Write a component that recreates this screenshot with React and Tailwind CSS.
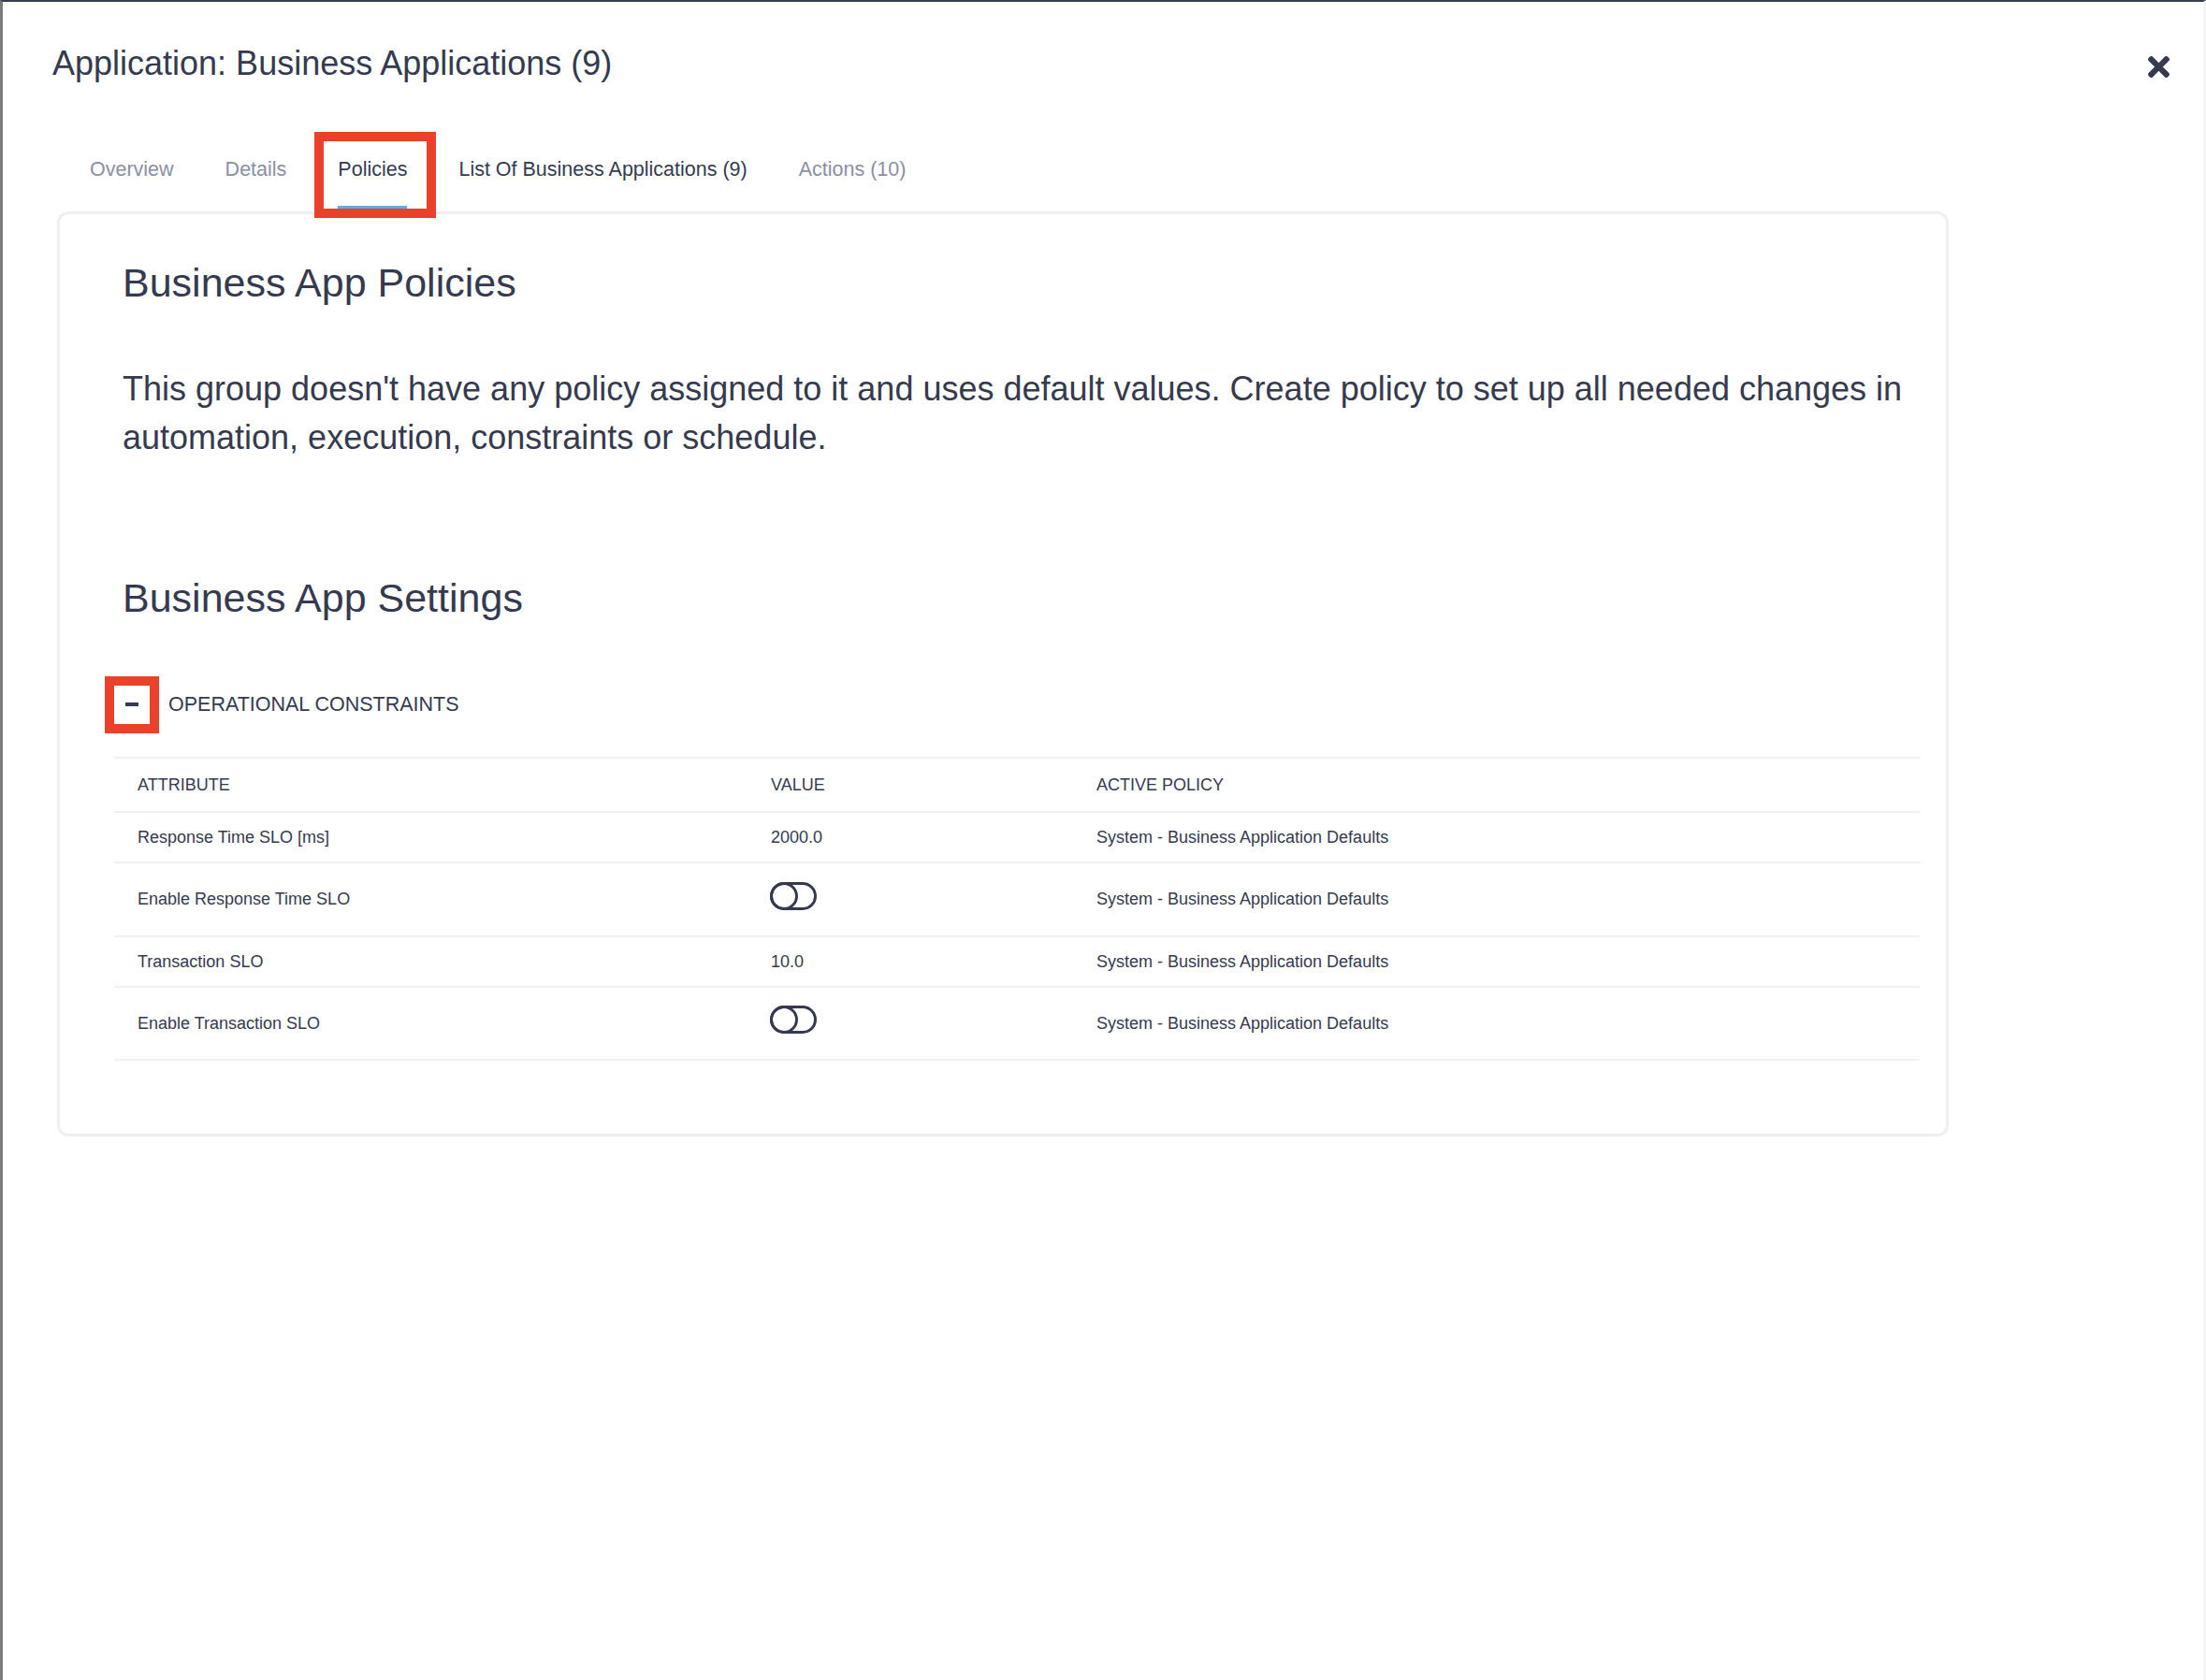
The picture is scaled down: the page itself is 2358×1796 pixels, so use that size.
import React from 'react';

const tabs = [
  { label: 'Overview', active: false, dark: false },
  { label: 'Details', active: false, dark: false },
  { label: 'Policies', active: true, dark: true },
  { label: 'List Of Business Applications (9)', active: false, dark: true },
  { label: 'Actions (10)', active: false, dark: false }
];

const rows = [
  { attr: 'Response Time SLO [ms]', value: '2000.0', toggle: false, h: 'h-[54px]' },
  { attr: 'Enable Response Time SLO', toggle: true, h: 'h-[79px]' },
  { attr: 'Transaction SLO', value: '10.0', toggle: false, h: 'h-[54px]' },
  { attr: 'Enable Transaction SLO', toggle: true, h: 'h-[80px] border-b-2' }
];

const Toggle = () => (
  <svg width="50" height="30" viewBox="0 0 50 30" fill="none" className="-translate-y-[4px]">
    <rect x="1.5" y="1.5" width="47" height="27" rx="13.5" stroke="#363a4f" strokeWidth="3" />
    <circle cx="15" cy="15" r="13.5" stroke="#363a4f" strokeWidth="3" />
  </svg>
);

const CloseIcon = () => (
  <svg width="23" height="23" viewBox="0 80 352 352" fill="#363a4f">
    <path d="M242.72 256l100.07-100.07c12.28-12.28 12.28-32.19 0-44.48l-22.24-22.24c-12.28-12.28-32.19-12.28-44.48 0L176 189.28 75.93 89.21c-12.28-12.28-32.19-12.28-44.48 0L9.21 111.45c-12.28 12.28-12.28 32.19 0 44.48L109.28 256 9.21 356.07c-12.28 12.28-12.28 32.19 0 44.48l22.24 22.24c12.28 12.28 32.2 12.28 44.48 0L176 322.72l100.07 100.07c12.28 12.28 32.2 12.28 44.48 0l22.24-22.24c12.28-12.28 12.28-32.19 0-44.48L242.72 256z" />
  </svg>
);

export default function App() {
  return (
    <div className="w-[2358px] h-[1796px] overflow-hidden bg-white border-t-2 border-t-[#3a3d50] border-l-[3px] border-l-[#7b7b7b] border-r-[3px] border-r-[#f5f5f5] font-['Liberation_Sans',Arial,sans-serif] text-[#363a4f]">
      <div className="pl-[53px] pr-[36px] pt-[44px]">
        {/* header */}
        <div className="flex justify-between items-start">
          <h1 className="text-[36px] leading-[44px]">Application: Business Applications (9)</h1>
          <div className="mt-[14px]">
            <CloseIcon />
          </div>
        </div>

        {/* tabs */}
        <div className="ml-[40px] mt-[77.5px] flex gap-[55px]">
          {tabs.map((t) => (
            <div key={t.label} className="relative flex flex-col">
              <span
                className={`text-[21.5px] leading-[26px] whitespace-nowrap ${
                  t.dark ? 'text-[#363a4f]' : 'text-[#8b8fa3]'
                }`}
              >
                {t.label}
              </span>
              <div className={`mt-[26.5px] h-[4px] ${t.active ? 'bg-[#56b0ea]' : 'bg-transparent'}`} />
              {t.active && (
                <div className="absolute -left-[25px] -right-[31px] -top-[26.5px] -bottom-[9px] border-[10px] border-[#e9412a]" />
              )}
            </div>
          ))}
        </div>

        {/* card */}
        <div className="ml-[5px] mt-[2px] w-[2022px] h-[989px] border-[3px] border-[#efefef] rounded-[12px] pt-[48px] pl-[58px] pr-[28px]">
          <h2 className="pl-[9px] text-[43px] leading-[50px]">Business App Policies</h2>
          <p className="pl-[9px] mt-[62.5px] text-[36px] leading-[52px]">
            This group doesn't have any policy assigned to it and uses default values. Create policy to set up all needed changes in automation, execution, constraints or schedule.
          </p>

          <h2 className="pl-[9px] mt-[120.5px] text-[43px] leading-[50px]">Business App Settings</h2>

          <div className="mt-[68.5px] flex items-center h-[41px]">
            <div className="relative w-[38px] h-[41px] flex items-center justify-center">
              <div className="w-[14px] h-[4px] bg-[#363a4f]" />
              <div className="absolute -inset-[10px] border-[10px] border-[#e9412a]" />
            </div>
            <span className="ml-[20px] text-[21.5px] leading-[26px]">OPERATIONAL CONSTRAINTS</span>
          </div>

          {/* table */}
          <div className="mt-[35.5px] text-[18px]">
            <div className="grid grid-cols-[677px_348px_1fr] items-center h-[58px] border-t-2 border-[#f1f1f6]">
              <span className="pl-[25px]">ATTRIBUTE</span>
              <span className="pl-[25px]">VALUE</span>
              <span className="pl-[25px]">ACTIVE POLICY</span>
            </div>
            {rows.map((r) => (
              <div
                key={r.attr}
                className={`grid grid-cols-[677px_348px_1fr] items-center border-t-2 border-[#f1f1f6] ${r.h}`}
              >
                <span className="pl-[25px]">{r.attr}</span>
                <div className="pl-[24px] flex items-center">
                  {r.toggle ? <Toggle /> : <span className="pl-[1px]">{r.value}</span>}
                </div>
                <span className="pl-[25px]">System - Business Application Defaults</span>
              </div>
            ))}
          </div>
        </div>
      </div>
    </div>
  );
}
